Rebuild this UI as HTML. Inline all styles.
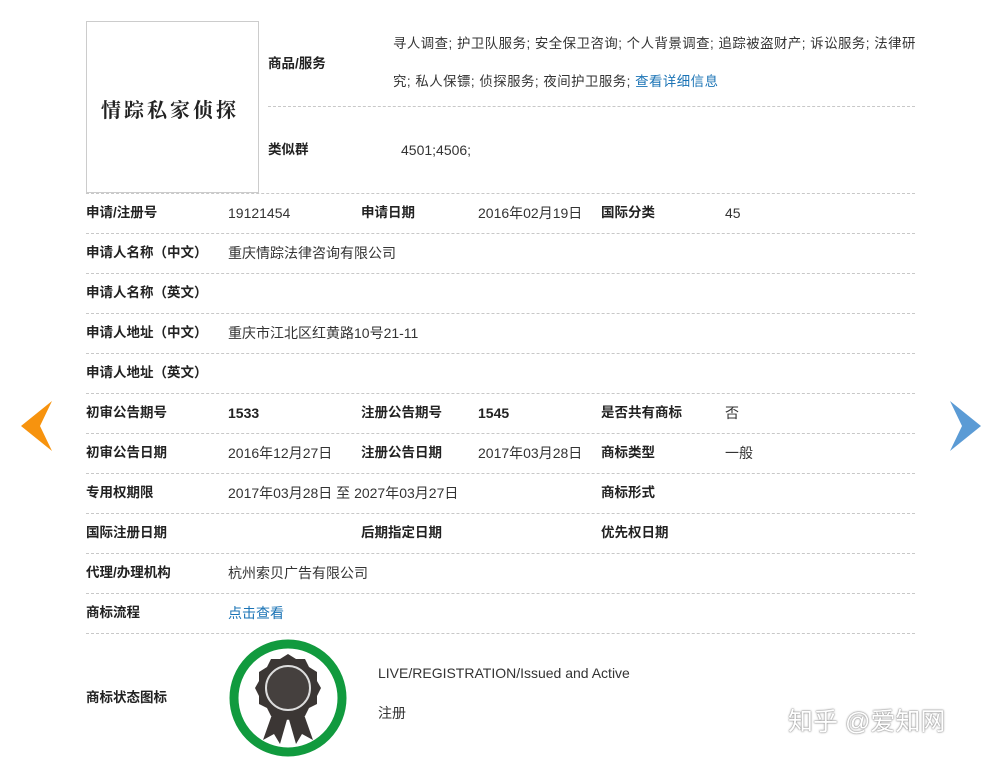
<!DOCTYPE html>
<html><head><meta charset="utf-8"><style>
body{margin:0;width:1002px;height:764px;background:#fff;position:relative;overflow:hidden;font-family:"Liberation Sans","Noto Sans CJK SC",sans-serif;font-size:14px;color:#333}
.a{position:absolute;white-space:nowrap;line-height:16px}
.b{font-weight:bold;color:#222;font-size:13.5px}
.l{position:absolute;left:86px;width:829px;border-top:1px dashed #c8c8c8;height:0}
.lk{color:#1a73b5}
</style></head><body>
<div style="position:absolute;left:86px;top:21px;width:171px;height:170px;border:1px solid #ccc"></div>
<div class="a" style="left:101px;top:96px;font-family:'Noto Serif CJK SC',serif;font-size:20px;line-height:26px;font-weight:bold;letter-spacing:3px;color:#222">情踪私家侦探</div>
<div class="a b" style="left:268px;top:56px">商品/服务</div>
<div class="a" style="left:393px;top:36px;font-size:13.4px;letter-spacing:0.5px">寻人调查; 护卫队服务; 安全保卫咨询; 个人背景调查; 追踪被盗财产; 诉讼服务; 法律研</div>
<div class="a" style="left:393px;top:74px;font-size:13.4px;letter-spacing:0.5px">究; 私人保镖; 侦探服务; 夜间护卫服务; <span class="lk">查看详细信息</span></div>
<div class="l" style="left:268px;width:647px;top:106px"></div>
<div class="a b" style="left:268px;top:142px">类似群</div>
<div class="a" style="left:401px;top:142px">4501;4506;</div>
<div class="l" style="top:193px"></div>
<div class="a b" style="left:86px;top:205px">申请/注册号</div><div class="a" style="left:228px;top:205px">19121454</div>
<div class="a b" style="left:361px;top:205px">申请日期</div><div class="a" style="left:478px;top:205px">2016年02月19日</div>
<div class="a b" style="left:601px;top:205px">国际分类</div><div class="a" style="left:725px;top:205px">45</div>
<div class="l" style="top:233px"></div>
<div class="a b" style="left:86px;top:245px">申请人名称（中文）</div><div class="a" style="left:228px;top:245px">重庆情踪法律咨询有限公司</div>
<div class="l" style="top:273px"></div>
<div class="a b" style="left:86px;top:285px">申请人名称（英文）</div>
<div class="l" style="top:313px"></div>
<div class="a b" style="left:86px;top:325px">申请人地址（中文）</div><div class="a" style="left:228px;top:325px">重庆市江北区红黄路10号21-11</div>
<div class="l" style="top:353px"></div>
<div class="a b" style="left:86px;top:365px">申请人地址（英文）</div>
<div class="l" style="top:393px"></div>
<div class="a b" style="left:86px;top:405px">初审公告期号</div><div class="a b" style="left:228px;top:405px;font-size:14px">1533</div>
<div class="a b" style="left:361px;top:405px">注册公告期号</div><div class="a b" style="left:478px;top:405px;font-size:14px">1545</div>
<div class="a b" style="left:601px;top:405px">是否共有商标</div><div class="a" style="left:725px;top:405px">否</div>
<div class="l" style="top:433px"></div>
<div class="a b" style="left:86px;top:445px">初审公告日期</div><div class="a" style="left:228px;top:445px">2016年12月27日</div>
<div class="a b" style="left:361px;top:445px">注册公告日期</div><div class="a" style="left:478px;top:445px">2017年03月28日</div>
<div class="a b" style="left:601px;top:445px">商标类型</div><div class="a" style="left:725px;top:445px">一般</div>
<div class="l" style="top:473px"></div>
<div class="a b" style="left:86px;top:485px">专用权期限</div><div class="a" style="left:228px;top:485px">2017年03月28日 至 2027年03月27日</div>
<div class="a b" style="left:601px;top:485px">商标形式</div>
<div class="l" style="top:513px"></div>
<div class="a b" style="left:86px;top:525px">国际注册日期</div>
<div class="a b" style="left:361px;top:525px">后期指定日期</div>
<div class="a b" style="left:601px;top:525px">优先权日期</div>
<div class="l" style="top:553px"></div>
<div class="a b" style="left:86px;top:565px">代理/办理机构</div><div class="a" style="left:228px;top:565px">杭州索贝广告有限公司</div>
<div class="l" style="top:593px"></div>
<div class="a b" style="left:86px;top:605px">商标流程</div><div class="a lk" style="left:228px;top:605px">点击查看</div>
<div class="l" style="top:633px"></div>
<div class="a b" style="left:86px;top:690px">商标状态图标</div>
<svg style="position:absolute;left:228px;top:638px" width="120" height="120" viewBox="0 0 120 120">
<circle cx="60" cy="60" r="54" fill="none" stroke="#119a3e" stroke-width="9"/>
<path d="M47 68 L35 102 L46 96 L52 106 L60 78 L68 106 L74 96 L85 102 L73 68 Z" fill="#3b3634"/>
<polygon points="60,16 68,21 77,21 81,29 89,34 89,43 93,50 89,58 89,66 81,70 77,78 68,78 60,82 52,78 43,78 39,70 31,66 31,58 27,50 31,43 31,34 39,29 43,21 52,21" fill="#3b3634"/>
<circle cx="60" cy="50" r="22" fill="#45403e" stroke="#ddd" stroke-width="2"/>
</svg>
<div class="a" style="left:378px;top:665px;font-size:14px">LIVE/REGISTRATION/Issued and Active</div>
<div class="a" style="left:378px;top:705px">注册</div>
<svg style="position:absolute;left:18px;top:400px" width="40" height="54"><polygon points="34,1 3,26 34,51 22,26" fill="#f7930e"/></svg>
<svg style="position:absolute;left:944px;top:400px" width="40" height="54"><polygon points="6,1 37,26 6,51 18,26" fill="#5b9bd5"/></svg>
<div class="a" style="left:788px;top:707px;font-size:25px;line-height:30px;color:#fff;text-shadow:0 0 2px #888,0 0 1px #666">知乎 @爱知网</div>
</body></html>
